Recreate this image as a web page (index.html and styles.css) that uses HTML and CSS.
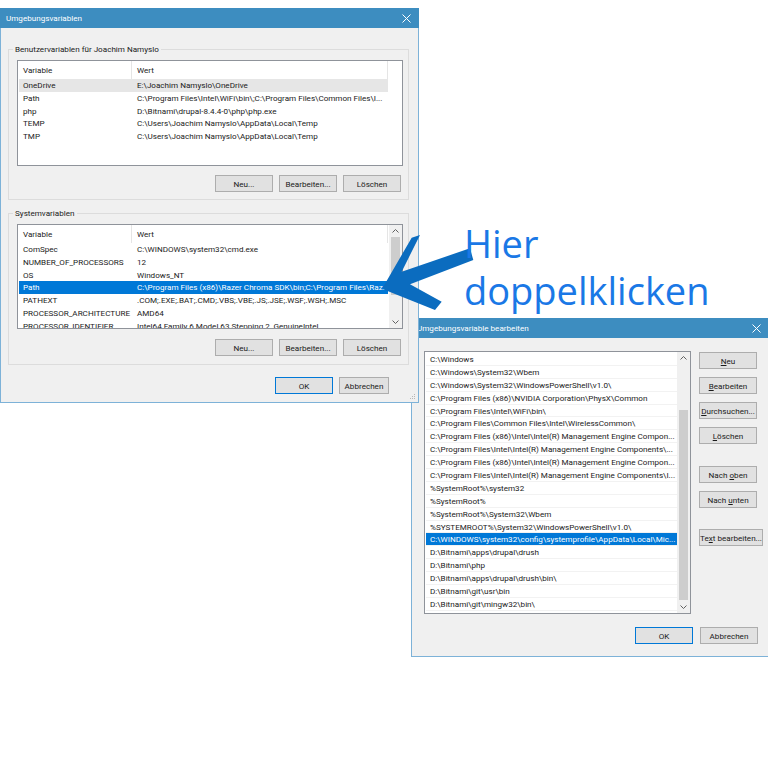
FILE: index.html
```html
<!DOCTYPE html>
<html lang="de">
<head>
    <meta charset="UTF-8">
    <title>Umgebungsvariablen</title>
    <link rel="stylesheet" href="styles.css">
</head>
<body>
    <div class="desk">

        <!-- Hauptdialog -->
        <div class="win win-main">
            <div class="titlebar">
                <span>Umgebungsvariablen</span>
                <svg class="close" width="9" height="9" viewBox="0 0 9 9"><path d="M0.5 0.5L8.5 8.5M8.5 0.5L0.5 8.5"/></svg>
            </div>

            <fieldset class="group">
                <legend>Benutzervariablen für Joachim Namyslo</legend>
                <div class="listview lv-user">
                    <div class="lv-body">
                        <div class="lv-head">
                            <span>Variable</span><span>Wert</span>
                        </div>
                        <div class="lv-row inactive"><span>OneDrive</span><span>E:\Joachim Namyslo\OneDrive</span></div>
                        <div class="lv-row"><span>Path</span><span>C:\Program Files\Intel\WiFi\bin\;C:\Program Files\Common Files\I...</span></div>
                        <div class="lv-row"><span>php</span><span>D:\Bitnami\drupal-8.4.4-0\php\php.exe</span></div>
                        <div class="lv-row"><span>TEMP</span><span>C:\Users\Joachim Namyslo\AppData\Local\Temp</span></div>
                        <div class="lv-row"><span>TMP</span><span>C:\Users\Joachim Namyslo\AppData\Local\Temp</span></div>
                    </div>
                </div>
                <div class="btn-row">
                    <button class="btn">Neu...</button>
                    <button class="btn">Bearbeiten...</button>
                    <button class="btn">Löschen</button>
                </div>
            </fieldset>

            <fieldset class="group group-sys">
                <legend>Systemvariablen</legend>
                <div class="listview lv-sys">
                    <div class="lv-body">
                        <div class="lv-head">
                            <span>Variable</span><span>Wert</span>
                        </div>
                        <div class="lv-row"><span>ComSpec</span><span>C:\WINDOWS\system32\cmd.exe</span></div>
                        <div class="lv-row"><span>NUMBER_OF_PROCESSORS</span><span>12</span></div>
                        <div class="lv-row"><span>OS</span><span>Windows_NT</span></div>
                        <div class="lv-row selected"><span>Path</span><span>C:\Program Files (x86)\Razer Chroma SDK\bin;C:\Program Files\Raz...</span></div>
                        <div class="lv-row"><span>PATHEXT</span><span>.COM;.EXE;.BAT;.CMD;.VBS;.VBE;.JS;.JSE;.WSF;.WSH;.MSC</span></div>
                        <div class="lv-row"><span>PROCESSOR_ARCHITECTURE</span><span>AMD64</span></div>
                        <div class="lv-row"><span>PROCESSOR_IDENTIFIER</span><span>Intel64 Family 6 Model 63 Stepping 2, GenuineIntel</span></div>
                    </div>
                    <div class="scrollbar sb-sys">
                        <div class="sb-arrow"><svg width="7" height="4" viewBox="0 0 7 4"><path d="M0.5 3.5L3.5 0.5L6.5 3.5"/></svg></div>
                        <div class="sb-thumb"></div>
                        <div class="sb-track"></div>
                        <div class="sb-arrow"><svg width="7" height="4" viewBox="0 0 7 4"><path d="M0.5 0.5L3.5 3.5L6.5 0.5"/></svg></div>
                    </div>
                </div>
                <div class="btn-row">
                    <button class="btn">Neu...</button>
                    <button class="btn">Bearbeiten...</button>
                    <button class="btn">Löschen</button>
                </div>
            </fieldset>

            <div class="footer footer-main">
                <button class="btn btn-default">OK</button>
                <button class="btn btn-cancel">Abbrechen</button>
            </div>

            <svg class="grip" width="6" height="6" viewBox="0 0 6 6">
                <rect x="4" y="0" width="1" height="1"/><rect x="2" y="2" width="1" height="1"/><rect x="4" y="2" width="1" height="1"/>
                <rect x="0" y="4" width="1" height="1"/><rect x="2" y="4" width="1" height="1"/><rect x="4" y="4" width="1" height="1"/>
            </svg>
        </div>

        <!-- Bearbeiten-Dialog -->
        <div class="win win-edit">
            <div class="titlebar">
                <span>Umgebungsvariable bearbeiten</span>
                <svg class="close" width="9" height="9" viewBox="0 0 9 9"><path d="M0.5 0.5L8.5 8.5M8.5 0.5L0.5 8.5"/></svg>
            </div>
            <div class="edit-body">
                <div class="listview lv-path">
                    <div class="lv-body">
                        <div class="path-row">C:\Windows</div>
                        <div class="path-row">C:\Windows\System32\Wbem</div>
                        <div class="path-row">C:\Windows\System32\WindowsPowerShell\v1.0\</div>
                        <div class="path-row">C:\Program Files (x86)\NVIDIA Corporation\PhysX\Common</div>
                        <div class="path-row">C:\Program Files\Intel\WiFi\bin\</div>
                        <div class="path-row">C:\Program Files\Common Files\Intel\WirelessCommon\</div>
                        <div class="path-row">C:\Program Files (x86)\Intel\Intel(R) Management Engine Compon...</div>
                        <div class="path-row">C:\Program Files\Intel\Intel(R) Management Engine Components\...</div>
                        <div class="path-row">C:\Program Files (x86)\Intel\Intel(R) Management Engine Compon...</div>
                        <div class="path-row">C:\Program Files\Intel\Intel(R) Management Engine Components\I...</div>
                        <div class="path-row">%SystemRoot%\system32</div>
                        <div class="path-row">%SystemRoot%</div>
                        <div class="path-row">%SystemRoot%\System32\Wbem</div>
                        <div class="path-row">%SYSTEMROOT%\System32\WindowsPowerShell\v1.0\</div>
                        <div class="path-row selected">C:\WINDOWS\system32\config\systemprofile\AppData\Local\Mic...</div>
                        <div class="path-row">D:\Bitnami\apps\drupal\drush</div>
                        <div class="path-row">D:\Bitnami\php</div>
                        <div class="path-row">D:\Bitnami\apps\drupal\drush\bin\</div>
                        <div class="path-row">D:\Bitnami\git\usr\bin</div>
                        <div class="path-row">D:\Bitnami\git\mingw32\bin\</div>
                    </div>
                    <div class="scrollbar sb-path">
                        <div class="sb-arrow"><svg width="7" height="4" viewBox="0 0 7 4"><path d="M0.5 3.5L3.5 0.5L6.5 3.5"/></svg></div>
                        <div class="sb-thumb"></div>
                        <div class="sb-track"></div>
                        <div class="sb-arrow"><svg width="7" height="4" viewBox="0 0 7 4"><path d="M0.5 0.5L3.5 3.5L6.5 0.5"/></svg></div>
                    </div>
                </div>
                <div class="side-buttons">
                    <button class="btn"><u>N</u>eu</button>
                    <button class="btn"><u>B</u>earbeiten</button>
                    <button class="btn"><u>D</u>urchsuchen...</button>
                    <button class="btn"><u>L</u>öschen</button>
                    <button class="btn sep">Nach <u>o</u>ben</button>
                    <button class="btn">Nach <u>u</u>nten</button>
                    <button class="btn btn-wide sep-small">Te<u>x</u>t bearbeiten...</button>
                </div>
            </div>
            <div class="footer footer-edit">
                <button class="btn btn-default">OK</button>
                <button class="btn">Abbrechen</button>
            </div>
        </div>

        <!-- Hinweis -->
        <svg class="arrow" width="768" height="768" viewBox="0 0 768 768">
            <polygon points="382.7,287.7 411.7,237.7 420,235 401.7,271.7 470,248.3 473.3,260 410,284.3 441.7,301.7 435,310 385,290"/>
        </svg>
        <div class="hint">Hier<br>doppelklicken</div>
    </div>
</body>
</html>
```

FILE: styles.css
```css
* {
    box-sizing: border-box;
}

body {
    margin: 0;
    background: #fff;
    font-family: 'Roboto', sans-serif;
    font-size: 8.1px;
    color: #1a1a1a;
}

.desk {
    position: relative;
    width: 768px;
    height: 768px;
    overflow: hidden;
}

/* Fenster */
.win {
    position: absolute;
    background: #f0f0f0;
    border: 1px solid #7db2d8;
}

.win-main {
    left: 0;
    top: 8px;
    width: 419px;
    height: 395px;
    z-index: 2;
}

.win-edit {
    left: 411px;
    top: 318px;
    width: 358px;
    height: 339px;
    z-index: 1;
}

.titlebar {
    height: 20px;
    margin: -1px -1px 0;
    background: #3d8dc0;
    color: #fff;
    display: flex;
    align-items: center;
    justify-content: space-between;
    padding: 0 8px 0 6px;
}

.close path {
    stroke: #fff;
    stroke-width: 1;
    fill: none;
}

.grip {
    position: absolute;
    right: 2px;
    bottom: 2px;
    fill: #b8b8b8;
}

/* Gruppen */
.group {
    margin: 15px 9px 0 7px;
    padding: 5px 5px 7px 8px;
    border: 1px solid #dcdcdc;
    min-width: 0;
}

.group-sys {
    margin-top: 7px;
    padding-bottom: 8px;
}

.group legend {
    margin-left: -4px;
    padding: 0 2px;
    line-height: 12px;
}

/* Listen */
.listview {
    background: #fff;
    border: 1px solid #8f939a;
    display: flex;
    overflow: hidden;
}

.lv-user {
    height: 106px;
}

.lv-sys {
    height: 105px;
}

.lv-body {
    flex: 1;
    min-width: 0;
    overflow: hidden;
}

.lv-head,
.lv-row {
    display: grid;
    grid-template-columns: 113px 256px;
    width: 369px;
    margin-left: 1px;
    white-space: nowrap;
}

.lv-head {
    height: 18px;
    line-height: 19px;
}

.lv-head span {
    border-right: 1px solid #e5e5e5;
}

.lv-row {
    height: 12.8px;
    line-height: 12.8px;
}

.lv-head span,
.lv-row span {
    padding-left: 4px;
    overflow: hidden;
}

.lv-head span + span,
.lv-row span + span {
    padding-left: 5px;
}

.lv-row.inactive {
    background: #e6e6e6;
}

.lv-row.selected,
.path-row.selected {
    background: #0078d7;
    color: #fff;
}

.sb-sys .sb-thumb {
    height: 58px;
}

/* Bildlaufleiste */
.scrollbar {
    width: 13px;
    background: #f0f0f0;
    display: flex;
    flex-direction: column;
}

.sb-arrow {
    height: 12px;
    display: flex;
    align-items: center;
    justify-content: center;
}

.sb-arrow path {
    stroke: #606060;
    stroke-width: 1;
    fill: none;
}

.sb-thumb {
    margin: 0 2px;
    background: #cdcdcd;
}

.sb-track {
    flex: 1;
}

/* Knöpfe */
.btn {
    height: 17px;
    width: 58px;
    padding: 0;
    background: #e1e1e1;
    border: 1px solid #adadad;
    font: inherit;
    color: #1a1a1a;
    white-space: nowrap;
    overflow: hidden;
}

.btn-default {
    border-color: #0078d7;
}

.btn-cancel {
    width: 50px;
}

.btn-row {
    display: flex;
    justify-content: flex-end;
    gap: 6px;
    margin-top: 9px;
    padding-right: 2px;
}

.group-sys .btn-row {
    margin-top: 10px;
}

.footer {
    display: flex;
    justify-content: flex-end;
    gap: 6px;
}

.footer-main {
    margin-top: 12px;
    padding-right: 29px;
}

/* Bearbeiten-Dialog */
.edit-body {
    display: flex;
    padding: 13px 0 0 12px;
}

.lv-path {
    width: 267px;
    height: 263px;
}

.lv-path .lv-body {
    padding-top: 1px;
}

.path-row {
    height: 12.9px;
    line-height: 12.9px;
    padding-left: 4px;
    margin-left: 1px;
    white-space: nowrap;
    overflow: hidden;
    border-bottom: 1px solid #f2f2f2;
}

.sb-path .sb-thumb {
    margin-top: 46px;
    height: 190px;
}

.side-buttons {
    display: flex;
    flex-direction: column;
    gap: 8px;
    margin: 1px 0 0 8px;
}

.side-buttons .sep {
    margin-top: 14px;
}

.side-buttons .sep-small {
    margin-top: 13px;
}

.btn-wide {
    width: 64px;
}

.footer-edit {
    margin-top: 13px;
    padding-right: 10px;
    gap: 7px;
}

/* Pfeil und Hinweis */
.arrow {
    position: absolute;
    left: 0;
    top: 0;
    z-index: 3;
    fill: #0b6cbf;
}

.hint {
    position: absolute;
    left: 464px;
    top: 220px;
    z-index: 3;
    font-family: 'Open Sans', sans-serif;
    font-size: 38px;
    line-height: 47px;
    color: #1a78e6;
}
```
